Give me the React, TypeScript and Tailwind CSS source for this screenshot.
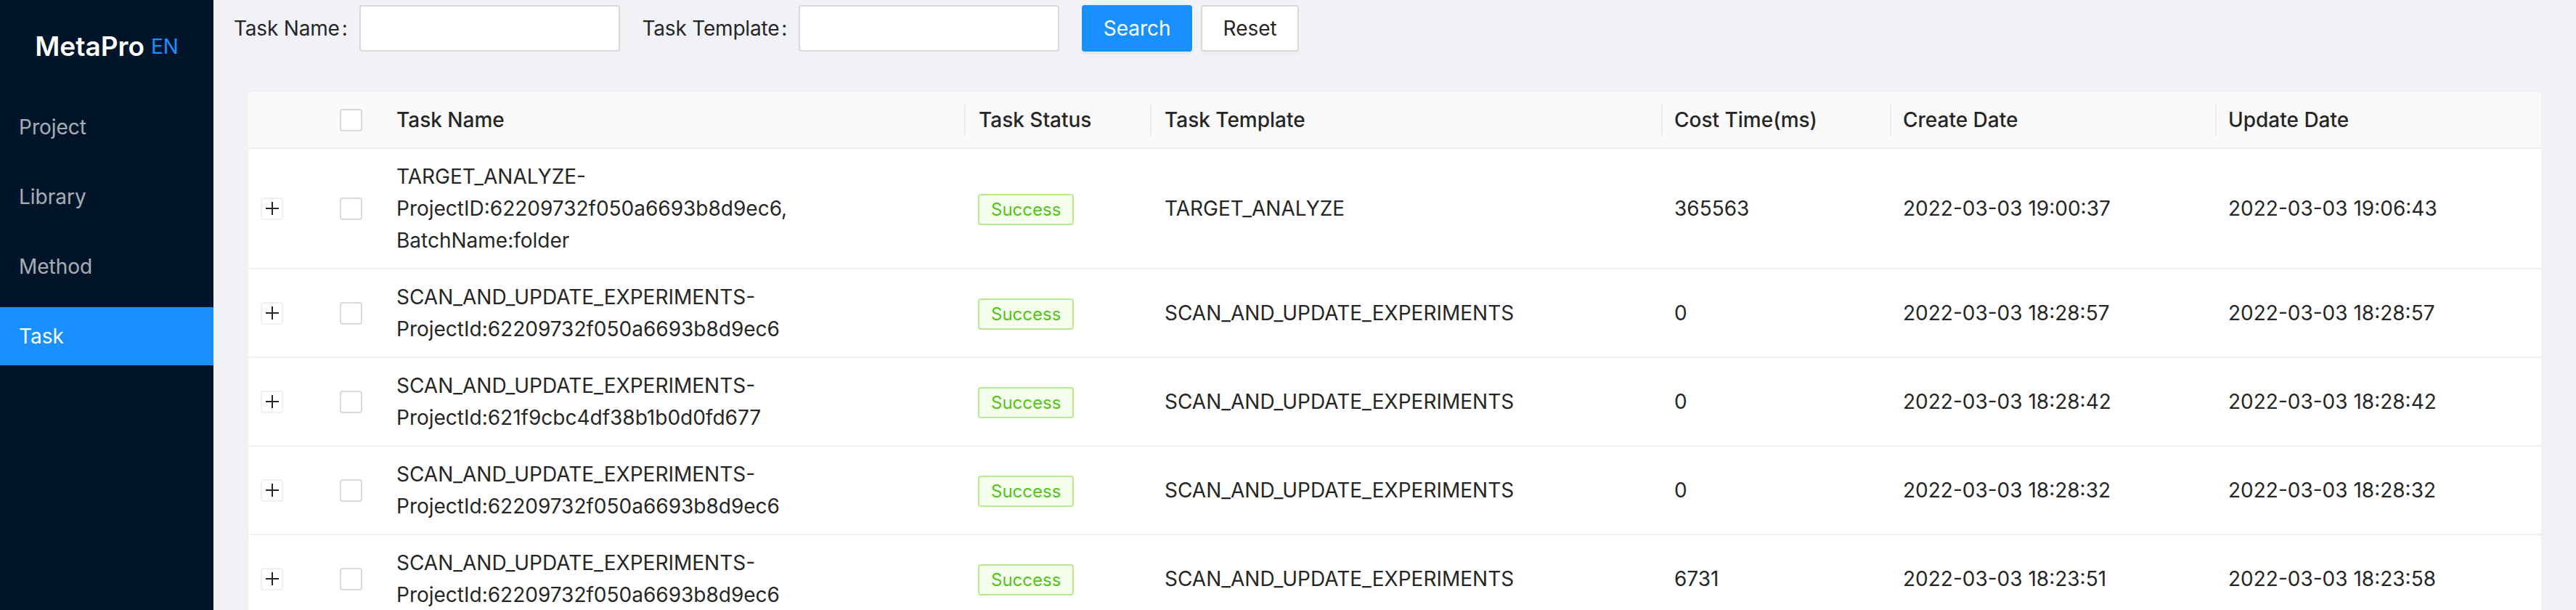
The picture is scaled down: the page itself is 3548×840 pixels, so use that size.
import React from 'react';

type Task = {
  name: string;
  status: string;
  template: string;
  cost: string;
  created: string;
  updated: string;
};

const TASKS: Task[] = [
  {
    name: 'TARGET_ANALYZE-ProjectID:62209732f050a6693b8d9ec6, BatchName:folder',
    status: 'Success',
    template: 'TARGET_ANALYZE',
    cost: '365563',
    created: '2022-03-03 19:00:37',
    updated: '2022-03-03 19:06:43',
  },
  {
    name: 'SCAN_AND_UPDATE_EXPERIMENTS-ProjectId:62209732f050a6693b8d9ec6',
    status: 'Success',
    template: 'SCAN_AND_UPDATE_EXPERIMENTS',
    cost: '0',
    created: '2022-03-03 18:28:57',
    updated: '2022-03-03 18:28:57',
  },
  {
    name: 'SCAN_AND_UPDATE_EXPERIMENTS-ProjectId:621f9cbc4df38b1b0d0fd677',
    status: 'Success',
    template: 'SCAN_AND_UPDATE_EXPERIMENTS',
    cost: '0',
    created: '2022-03-03 18:28:42',
    updated: '2022-03-03 18:28:42',
  },
  {
    name: 'SCAN_AND_UPDATE_EXPERIMENTS-ProjectId:62209732f050a6693b8d9ec6',
    status: 'Success',
    template: 'SCAN_AND_UPDATE_EXPERIMENTS',
    cost: '0',
    created: '2022-03-03 18:28:32',
    updated: '2022-03-03 18:28:32',
  },
  {
    name: 'SCAN_AND_UPDATE_EXPERIMENTS-ProjectId:62209732f050a6693b8d9ec6',
    status: 'Success',
    template: 'SCAN_AND_UPDATE_EXPERIMENTS',
    cost: '6731',
    created: '2022-03-03 18:23:51',
    updated: '2022-03-03 18:23:58',
  },
];

const MENU = ['Project', 'Library', 'Method', 'Task'];

const Checkbox = () => (
  <span className="block w-[31px] h-[31px] bg-white border-2 border-[#d9d9d9] rounded-[4px]" />
);

const ExpandButton = () => (
  <span className="flex items-center justify-center w-[31px] h-[31px] bg-white border-2 border-[#f0f0f0] rounded-[4px]">
    <svg width="18" height="18" viewBox="0 0 18 18">
      <rect x="0" y="8" width="18" height="2" fill="#262626" />
      <rect x="8" y="0" width="2" height="18" fill="#262626" />
    </svg>
  </span>
);

// header column divider, drawn on the left edge of the cell
const sep =
  "relative before:content-[''] before:absolute before:left-0 before:top-[16px] before:h-[44px] before:w-[2px] before:bg-[#ececec]";

const SearchField = ({ label }: { label: string }) => (
  <div className="flex items-center mr-[31px]">
    <span className="text-[28px] leading-[44px] text-[#262626] tracking-[-0.2px]">
      {label}
      <span className="ml-[3px] mr-[16px]">:</span>
    </span>
    <input className="w-[359px] h-[64px] bg-white border-2 border-[#d9d9d9] rounded-[4px] outline-none" />
  </div>
);

export default function App() {
  return (
    <div className="flex min-h-screen bg-[#f0f2f5] font-['Inter','Noto_Sans',sans-serif] text-[#262626]">
      <aside className="w-[294px] shrink-0 bg-[#001529]">
        <div className="h-[127px] flex items-center justify-center gap-[9px]">
          <span className="text-[37px] font-semibold text-white">MetaPro</span>
          <span className="text-[28px] text-[#1890ff]">EN</span>
        </div>
        <nav className="pt-[8px] flex flex-col gap-[16px]">
          {MENU.map((m) => (
            <div
              key={m}
              className={
                m === 'Task'
                  ? 'h-[80px] flex items-center pl-[26px] text-[28px] text-white bg-[#1890ff]'
                  : 'h-[80px] flex items-center pl-[26px] text-[28px] text-white/65'
              }
            >
              {m}
            </div>
          ))}
        </nav>
      </aside>

      <main className="flex-1 min-w-0">
        <div className="flex items-center pl-[28px] pt-[7px]">
          <SearchField label="Task Name" />
          <SearchField label="Task Template" />
          <button className="h-[64px] w-[152px] bg-[#1890ff] text-white text-[28px] rounded-[4px] shadow-[0_4px_0_rgba(0,0,0,0.045)]">
            Search
          </button>
          <button className="h-[64px] w-[135px] ml-[12px] bg-white border-2 border-[#d9d9d9] text-[28px] text-[#262626] rounded-[4px] shadow-[0_4px_0_rgba(0,0,0,0.02)]">
            Reset
          </button>
        </div>

        <div className="px-[48px] mt-[56px]">
          <table className="w-full table-fixed border-collapse bg-white text-[28px] leading-[44px]">
            <colgroup>
              <col className="w-[106px]" />
              <col className="w-[78px]" />
              <col className="w-[802px]" />
              <col className="w-[256px]" />
              <col className="w-[704px]" />
              <col className="w-[315px]" />
              <col className="w-[448px]" />
              <col className="w-[449px]" />
            </colgroup>
            <thead>
              <tr className="bg-[#fafafa] border-b-2 border-[#f0f0f0] text-left">
                <th className="py-[16px]" />
                <th className="py-[16px] pl-[20px]">
                  <Checkbox />
                </th>
                <th className="py-[16px] px-[20px] font-medium">Task Name</th>
                <th className={`py-[16px] px-[20px] font-medium ${sep}`}>Task Status</th>
                <th className={`py-[16px] px-[20px] font-medium ${sep}`}>Task Template</th>
                <th className={`py-[16px] px-[18px] font-medium ${sep}`}>Cost Time(ms)</th>
                <th className={`py-[16px] px-[18px] font-medium ${sep}`}>Create Date</th>
                <th className={`py-[16px] px-[18px] font-medium ${sep}`}>Update Date</th>
              </tr>
            </thead>
            <tbody>
              {TASKS.map((t, i) => (
                <tr key={i} className="border-b-2 border-[#f0f0f0]">
                  <td className="py-[16px] pl-[17px]">
                    <ExpandButton />
                  </td>
                  <td className="py-[16px] pl-[20px]">
                    <Checkbox />
                  </td>
                  <td className="py-[16px] px-[20px]">{t.name}</td>
                  <td className="py-[16px] px-[19px]">
                    <span className="inline-block px-[16px] leading-[39px] text-[24px] text-[#52c41a] bg-[#f6ffed] border-2 border-[#b7eb8f] rounded-[4px]">
                      {t.status}
                    </span>
                  </td>
                  <td className="py-[16px] px-[20px]">{t.template}</td>
                  <td className="py-[16px] px-[18px]">{t.cost}</td>
                  <td className="py-[16px] px-[18px]">{t.created}</td>
                  <td className="py-[16px] px-[18px]">{t.updated}</td>
                </tr>
              ))}
            </tbody>
          </table>
        </div>
      </main>
    </div>
  );
}
